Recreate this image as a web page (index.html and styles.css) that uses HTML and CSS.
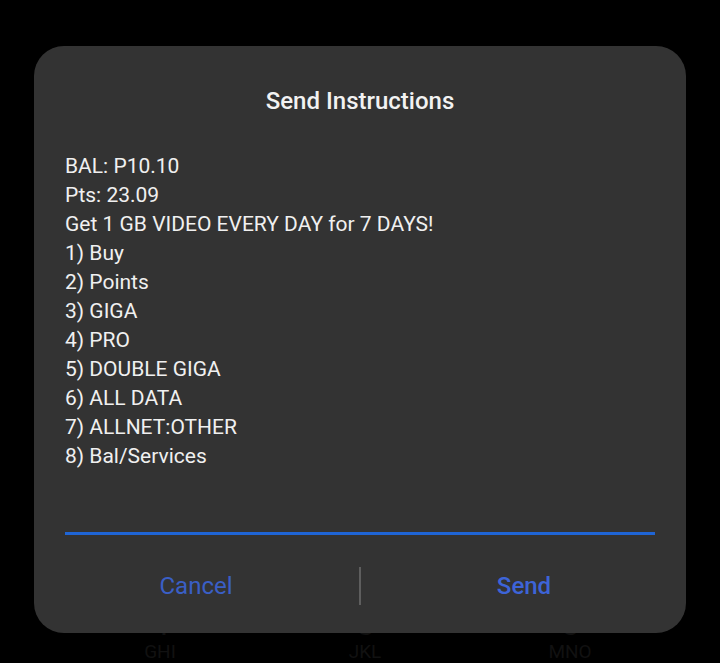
FILE: index.html
```html
<!DOCTYPE html>
<html>
<head>
<meta charset="utf-8">
<link rel="stylesheet" href="styles.css">
</head>
<body>
<div class="keypad">
  <div class="key"><span class="digit">4</span><span class="letters">GHI</span></div>
  <div class="key"><span class="digit">5</span><span class="letters">JKL</span></div>
  <div class="key"><span class="digit">6</span><span class="letters">MNO</span></div>
</div>
<div class="overlay">
  <div class="dialog">
    <div class="title">Send Instructions</div>
    <div class="message">
      <div>BAL: P10.10</div>
      <div>Pts: 23.09</div>
      <div>Get 1 GB VIDEO EVERY DAY for 7 DAYS!</div>
      <div>1) Buy</div>
      <div>2) Points</div>
      <div>3) GIGA</div>
      <div>4) PRO</div>
      <div>5) DOUBLE GIGA</div>
      <div>6) ALL DATA</div>
      <div>7) ALLNET:OTHER</div>
      <div>8) Bal/Services</div>
    </div>
    <div class="input"></div>
    <div class="buttons">
      <div class="btn cancel">Cancel</div>
      <div class="divider"></div>
      <div class="btn send">Send</div>
    </div>
  </div>
</div>
</body>
</html>
```
FILE: styles.css
```css
html, body {
  margin: 0;
  padding: 0;
  background: #000;
  width: 720px;
  height: 663px;
  overflow: hidden;
  font-family: Roboto, "Noto Sans", sans-serif;
}
.keypad {
  display: flex;
  justify-content: space-between;
  padding: 605px 110px 0 120px;
}
.key {
  width: 80px;
  display: flex;
  flex-direction: column;
  align-items: center;
  color: #111111;
}
.digit {
  font-size: 34px;
  line-height: 36px;
}
.letters {
  font-size: 19px;
  line-height: 21px;
}
.overlay {
  position: fixed;
  inset: 0;
  padding: 46px 34px 0 34px;
}
.dialog {
  background: #333333;
  border-radius: 30px;
  height: 587px;
  box-sizing: border-box;
  padding: 40px 31px 20px 31px;
  display: flex;
  flex-direction: column;
}
.title {
  text-align: center;
  color: #f2f2f2;
  font-size: 24px;
  font-weight: 500;
  line-height: 30px;
}
.message {
  margin-top: 36px;
  color: #f0f0f0;
  font-size: 21px;
  line-height: 29px;
}
.input {
  height: 61px;
  border-bottom: 3px solid #1f65d6;
  flex: none;
}
.buttons {
  display: flex;
  align-items: center;
  height: 56px;
  margin: 23px -32px 0 -32px;
}
.btn {
  flex: 1;
  text-align: center;
  font-size: 24px;
  color: #3a5fc6;
}
.btn.send {
  font-weight: 500;
  color: #3d64d8;
}
.divider {
  width: 2px;
  height: 38px;
  background: #5e5e5e;
}
```
